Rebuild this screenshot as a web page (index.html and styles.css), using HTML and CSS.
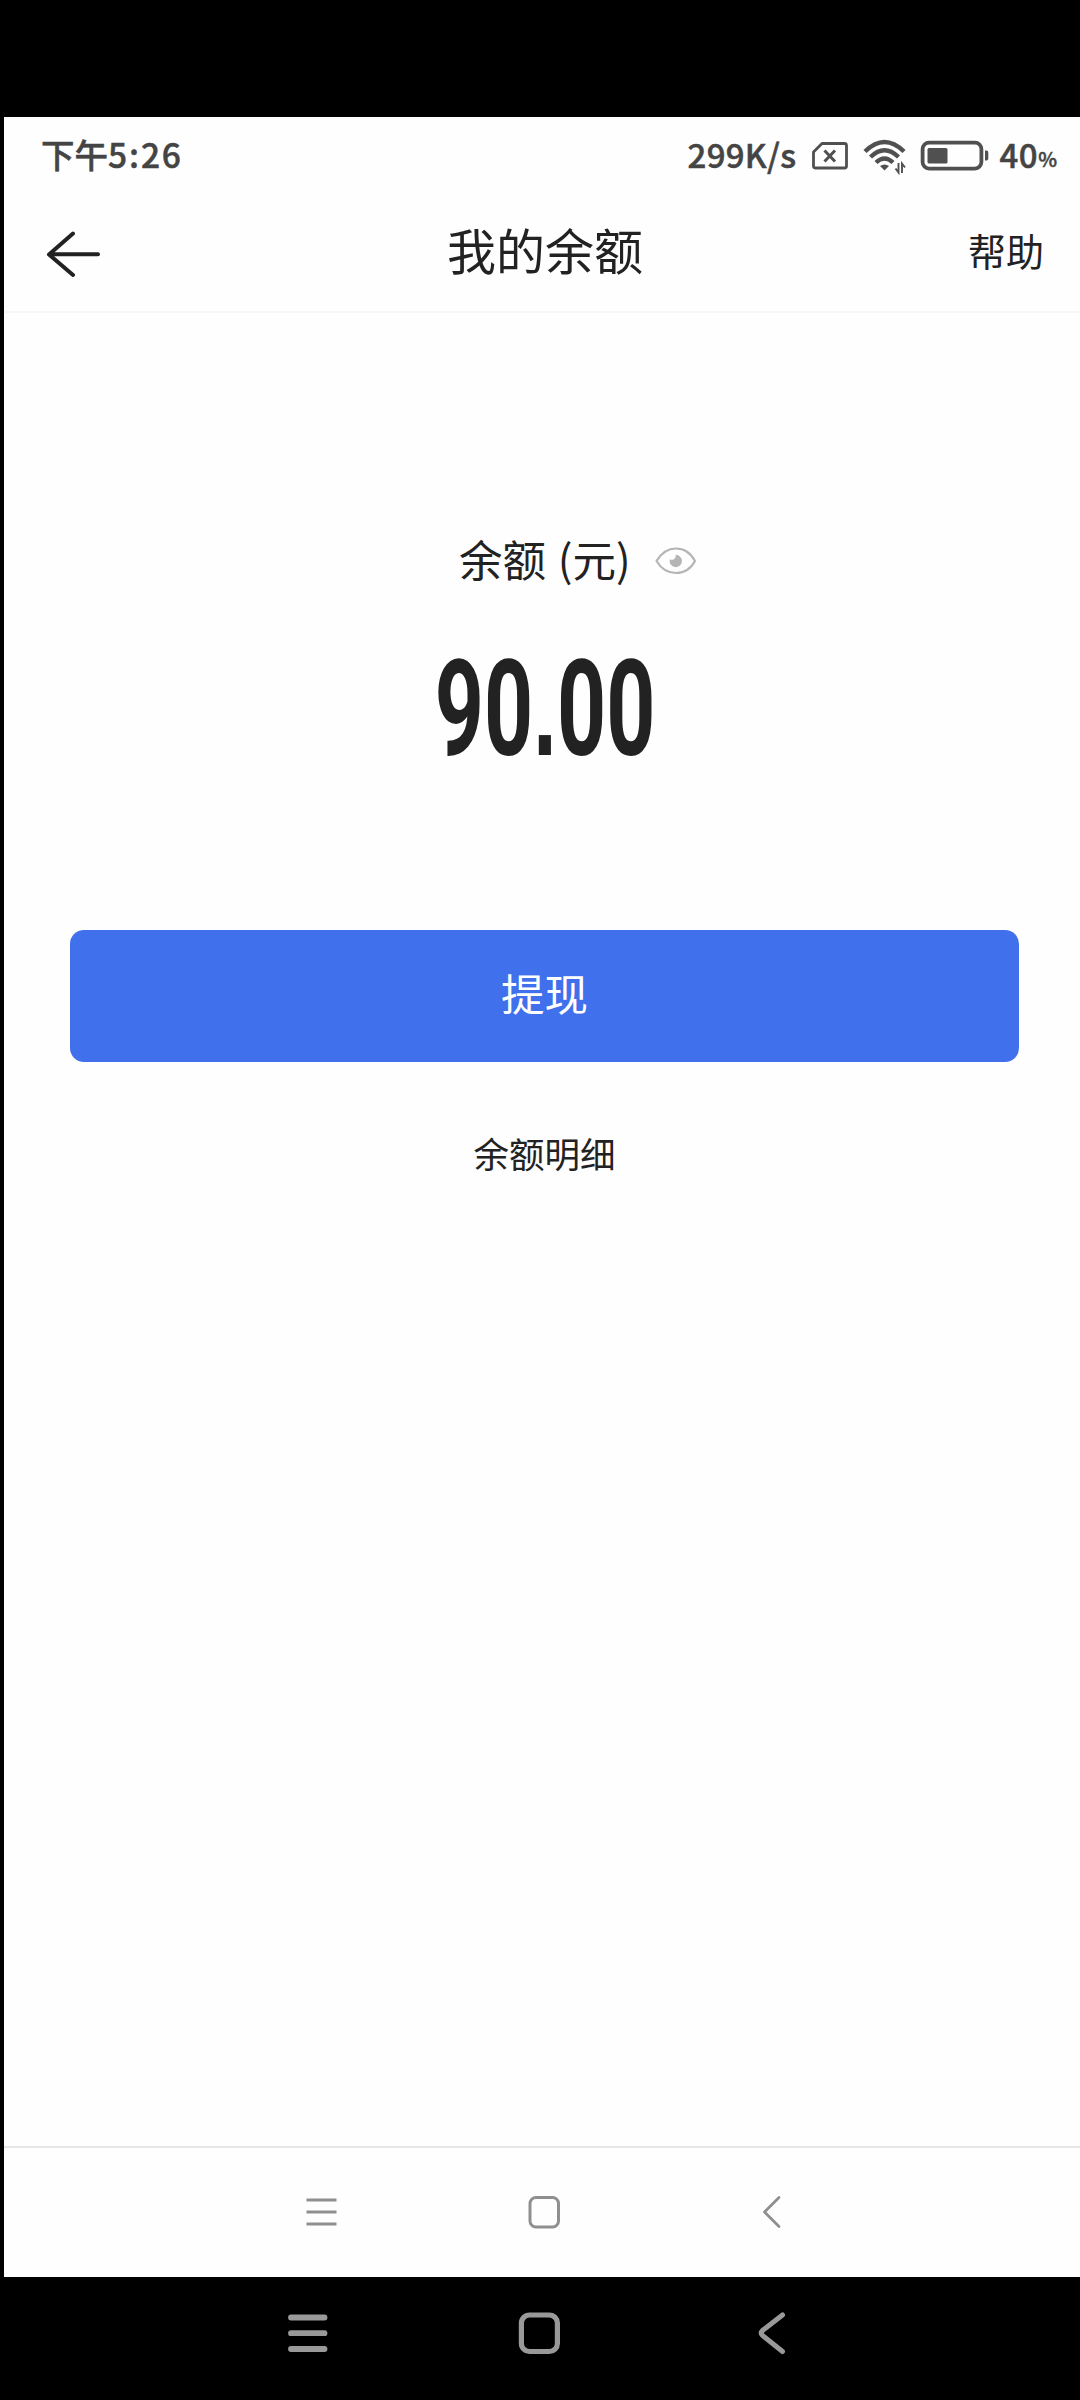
FILE: index.html
```html
<!DOCTYPE html>
<html lang="zh-CN">
<head>
<meta charset="utf-8">
<title>我的余额</title>
<link rel="stylesheet" href="styles.css">
</head>
<body>
<div class="screen">
  <div class="app">
    <div class="status">
      <span class="time">下午<span class="clock">5:26</span></span>
      <span class="speed">299K/s</span>
      <svg class="sim" width="38" height="30" viewBox="0 0 38 30" fill="none" stroke="#505050">
        <path d="M11 2.500H33.500Q35.500 2.500 35.500 4.500V25Q35.500 27 33.500 27H4.500Q2.500 27 2.500 25V11Z" stroke-width="2.800" stroke-linejoin="round"/>
        <path d="M13.500 9.500L24 20.500M24 9.500L13.500 20.500" stroke-width="3"/>
      </svg>
      <svg class="wifi" width="44" height="36" viewBox="0 0 44 36" fill="none" stroke="#505050" stroke-width="4.400">
        <path d="M2 12.500Q21.500 -6.500 41 12.500"/>
        <path d="M7.500 18Q21.500 4.500 35.500 18"/>
        <path d="M13 23.500Q21.500 15.500 30 23.500"/>
        <path d="M17 27Q21.500 24 26 27L21.500 31.500Z" fill="#505050" stroke="none"/>
        <path d="M35.500 24V33.500L32.500 29.500M39 34V24.500L42 28.500" stroke-width="1.900"/>
      </svg>
      <svg class="battery" width="70" height="32" viewBox="0 0 70 32">
        <rect x="2.600" y="2.600" width="58.800" height="26" rx="6.500" fill="none" stroke="#505050" stroke-width="3.800"/>
        <rect x="7.500" y="8" width="20" height="15.500" rx="1.500" fill="#505050"/>
        <path d="M65 10.500h1.500q1.800 0 1.800 2v6q0 2-1.800 2H65z" fill="#505050"/>
      </svg>
      <span class="level">40</span><span class="percent">%</span>
    </div>
    <header class="header">
      <svg class="back" width="56" height="48" viewBox="0 0 56 48" fill="none" stroke="#222" stroke-width="4" stroke-linecap="round" stroke-linejoin="round">
        <path d="M27 3.500L3 24.500L27 45M4 24.300H52"/>
      </svg>
      <h1 class="title">我的余额</h1>
      <a class="help">帮助</a>
    </header>
    <main class="content">
      <div class="label-row">
        <span class="label">余额 (元)</span>
        <svg class="eye" width="44" height="30" viewBox="0 0 44 30">
          <path d="M2.500 15C7 7.500 14 2.500 22 2.500S37 7.500 41 15C37 22.500 30 27 22 27S7 22.500 2.500 15Z" fill="none" stroke="#b5b5b5" stroke-width="2.200" stroke-linejoin="round"/>
          <path d="M21.500 8.800A6.200 6.200 0 1 1 15.800 13.300Q17.500 14.300 19.500 13.500Q22.500 12 21.500 8.800Z" fill="#b5b5b5"/>
        </svg>
      </div>
      <div class="amount">90<span class="dot">.</span>00</div>
      <button class="withdraw">提现</button>
      <a class="details">余额明细</a>
    </main>
    <nav class="app-nav">
      <svg width="32" height="34" viewBox="0 0 32 34" fill="none" stroke="#8f8f8f" stroke-width="3">
        <path d="M1.500 5H31.500M1.500 17H31.500M1.500 29H31.500"/>
      </svg>
      <svg class="home" width="32" height="34" viewBox="0 0 32 34" fill="none" stroke="#8f8f8f" stroke-width="3">
        <rect x="2" y="2.500" width="28.500" height="29.500" rx="6"/>
      </svg>
      <svg class="previous" width="32" height="34" viewBox="0 0 32 34" fill="none" stroke="#8f8f8f" stroke-width="2.800" stroke-linejoin="round" stroke-linecap="round">
        <path d="M17 2.500L2.500 17L17 31.500"/>
      </svg>
    </nav>
  </div>
  <nav class="system-nav">
    <svg width="42" height="44" viewBox="0 0 42 44" fill="none" stroke="#999" stroke-width="5.800" stroke-linecap="round">
      <path d="M4 6.500H37.500M4 22.200H37.500M4 38H37.500"/>
    </svg>
    <svg class="home" width="42" height="44" viewBox="0 0 42 44" fill="none" stroke="#999" stroke-width="5.200">
      <rect x="3.400" y="4" width="36" height="36.500" rx="8"/>
    </svg>
    <svg class="previous" width="42" height="44" viewBox="0 0 42 44" fill="none" stroke="#999" stroke-width="5" stroke-linecap="round">
      <path d="M25.500 4L5.500 19.500Q3 22 5.500 24.500L25.500 40.500"/>
    </svg>
  </nav>
</div>
</body>
</html>
```
FILE: styles.css
```css
* { box-sizing: border-box; }
body {
  margin: 0;
  background: #000;
  font-family: "Noto Sans CJK SC", sans-serif;
  color: #222;
}
svg { display: block; flex: none; }
.screen {
  width: 1080px;
  height: 2400px;
  padding: 117px 0 0 4px;
  display: flex;
  flex-direction: column;
}
.app {
  height: 2160px;
  background: #fefefe;
  display: flex;
  flex-direction: column;
}
.status {
  height: 78px;
  padding: 0 23px 0 37px;
  display: flex;
  align-items: center;
  color: #444;
  font-weight: 500;
  -webkit-text-stroke: .5px #444;
  white-space: nowrap;
}
.time, .speed, .level { line-height: 74px; padding-bottom: 4px; }
.time { font-size: 33.500px; flex: 1; }
.clock { letter-spacing: 1.900px; }
.speed { font-size: 33px; letter-spacing: .3px; }
.sim { margin-left: 15px; }
.wifi { margin-left: 14px; margin-top: 1px; }
.battery { margin-left: 13px; }
.level { font-size: 33px; margin-left: 9px; letter-spacing: .6px; }
.percent { font-size: 20px; line-height: 72px; padding-top: 6px; }
.header {
  height: 118px;
  padding: 0 36px 0 42px;
  border-bottom: 2px solid #f7f7f7;
  display: grid;
  grid-template-columns: 1fr auto 1fr;
  align-items: center;
}
.back { margin-top: 1px; }
.title {
  margin: 0;
  padding-bottom: 9px;
  font-size: 49px;
  line-height: 70px;
  font-weight: 400;
}
.help {
  padding-bottom: 6px;
  font-size: 38px;
  line-height: 60px;
  justify-self: end;
}
.content {
  flex: 1;
  padding: 212px 61px 0 66px;
  display: flex;
  flex-direction: column;
  align-items: center;
}
.label-row {
  width: 100%;
  height: 72px;
  padding-left: 389px;
  display: flex;
  align-items: center;
  gap: 23px;
}
.label {
  padding-bottom: 5px;
  font-size: 43.500px;
  line-height: 67px;
  word-spacing: 2px;
  white-space: nowrap;
}
.amount {
  margin-top: 32px;
  height: 160px;
  padding-left: 2px;
  font: 700 134px/160px Roboto, sans-serif;
  transform: scaleX(.64);
}
.dot { font-family: "Liberation Sans", sans-serif; }
.withdraw {
  width: 949px;
  height: 132px;
  margin-top: 141px;
  padding: 0 0 6px;
  border: 0;
  border-radius: 14px;
  background: #4070ec;
  color: #fff;
  font: 400 43.500px/126px "Noto Sans CJK SC", sans-serif;
}
.details { margin-top: 64px; font-size: 35.500px; line-height: 54px; }
.app-nav {
  height: 131px;
  border-top: 2px solid #e6e6e6;
  padding: 0 0 2px 301px;
  display: flex;
  align-items: center;
}
.app-nav .home { margin-left: 191px; }
.app-nav .previous { margin-left: 202px; }
.system-nav {
  height: 123px;
  padding: 0 0 11px 283px;
  display: flex;
  align-items: center;
}
.system-nav .home { margin-left: 189px; }
.system-nav .previous { margin-left: 197px; }
```
